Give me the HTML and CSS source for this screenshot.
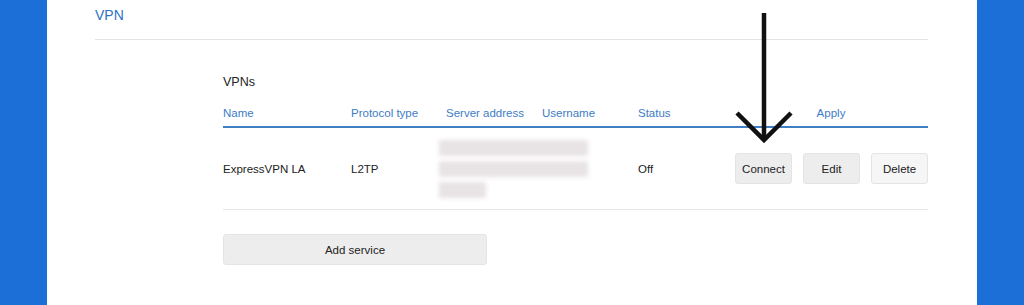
FILE: index.html
```html
<!DOCTYPE html>
<html lang="en">
<head>
    <meta charset="UTF-8">
    <meta name="viewport" content="width=device-width, initial-scale=1.0">
    <title>VPN</title>
    <link rel="stylesheet" href="styles.css">
</head>
<body>
    <div class="page">
        <div class="sideBar"></div>

        <div class="mainPanel">
            <h1 class="pageTitle">VPN</h1>

            <div class="vpnSection">
                <h2 class="sectionTitle">VPNs</h2>

                <div class="vpnTable">
                    <div class="tableRow tableHead">
                        <span>Name</span>
                        <span>Protocol type</span>
                        <span>Server address</span>
                        <span>Username</span>
                        <span>Status</span>
                        <span class="applyCol">Apply</span>
                    </div>
                    <div class="tableRow tableBody">
                        <span>ExpressVPN LA</span>
                        <span>L2TP</span>
                        <span class="hiddenInfo">
                            <i class="blurBar"></i>
                            <i class="blurBar"></i>
                            <i class="blurBar short"></i>
                        </span>
                        <span></span>
                        <span>Off</span>
                        <span class="actionButtons">
                            <button class="smallButton">Connect</button>
                            <button class="smallButton">Edit</button>
                            <button class="smallButton light">Delete</button>
                        </span>
                    </div>
                </div>

                <button class="addButton">Add service</button>
            </div>

            <!-- 화살표 표시 -->
            <svg class="arrowMark" width="64" height="136" viewBox="0 0 64 136">
                <line x1="32" y1="5" x2="32" y2="131" stroke="#111" stroke-width="4.5"/>
                <polyline points="5,105 32,132 59,105" fill="none" stroke="#111" stroke-width="4.5"/>
            </svg>
        </div>

        <div class="sideBar"></div>
    </div>
</body>
</html>
```

FILE: styles.css
```css
body {
    margin: 0;
    font-family: "Liberation Sans", Arial, sans-serif;
    color: #222;
    background: #fff;
}
.page {
    display: flex;
    height: 305px;
}
.sideBar {
    width: 47px;
    background: #1b6fd6;
}
.mainPanel {
    position: relative;
    flex: 1;
    padding: 0 49px 0 48px;
    background: #fff;
}
.pageTitle {
    margin: 0;
    padding: 7px 0 15px 0;
    font-size: 14px;
    line-height: 17px;
    font-weight: normal;
    color: #2f72c2;
    border-bottom: 1px solid #e3e3e3;
}
.vpnSection {
    margin-left: 128px;
    padding-top: 35px;
}
.sectionTitle {
    margin: 0 0 16px 0;
    font-size: 12.5px;
    line-height: 15px;
    font-weight: normal;
    color: #222;
}
.tableRow {
    display: grid;
    grid-template-columns: 128px 95px 96px 96px 96px 1fr;
    font-size: 11.5px;
    line-height: 14px;
}
.tableHead {
    padding-bottom: 6px;
    color: #3d7cc6;
    border-bottom: 2px solid #3f7fc4;
}
.applyCol {
    text-align: center;
}
.tableBody {
    align-items: center;
    min-height: 81px;
    border-bottom: 1px solid #e6e6e6;
}
.hiddenInfo {
    display: flex;
    flex-direction: column;
    gap: 5px;
    margin-left: -7px;
}
.blurBar {
    display: block;
    width: 149px;
    height: 16px;
    background: #e8e3e5;
    filter: blur(2px);
}
.blurBar.short {
    width: 47px;
}
.actionButtons {
    display: flex;
    justify-content: flex-end;
    gap: 11px;
}
.smallButton, .addButton {
    font-family: inherit;
    font-size: 11.5px;
    color: #222;
    background: #ededed;
    border: 1px solid #e4e4e4;
    border-radius: 3px;
}
.smallButton {
    width: 57px;
    height: 31px;
    padding: 0;
}
.smallButton.light {
    background: #f6f6f6;
}
.addButton {
    display: block;
    width: 264px;
    height: 31px;
    margin-top: 24px;
}
.arrowMark {
    position: absolute;
    left: 685px;
    top: 8px;
}
```
